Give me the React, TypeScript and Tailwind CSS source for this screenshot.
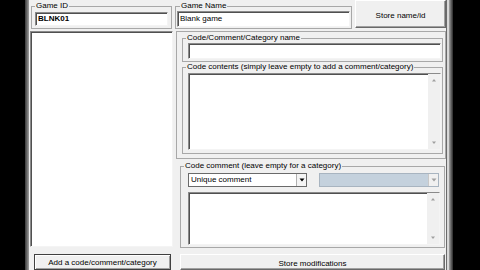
import type { ReactNode } from "react";

const SUNKEN =
  "border border-t-[#8a8a8a] border-l-[#8a8a8a] border-r-[#f4f4f4] border-b-[#f4f4f4] shadow-[inset_1px_1px_0_#505050] bg-white";
const RAISED =
  "border border-t-white border-l-white border-r-[#696969] border-b-[#696969] shadow-[inset_-1px_-1px_0_#a0a0a0] bg-[#f0f0f0]";

function Group({ label, className, children }: { label?: string; className: string; children: ReactNode }) {
  return (
    <fieldset className={`border border-[#a8a8a8] ${className}`}>
      {label && <legend className="ml-[3px] px-[1px] leading-[10px]">{label}</legend>}
      {children}
    </fieldset>
  );
}

function ScrollBar() {
  return (
    <div className="flex w-[12px] shrink-0 flex-col justify-between bg-[#f0f0f0] py-[3px]">
      <svg width="12" height="6" viewBox="0 0 12 6">
        <path d="M4 4.5 L6 2 L8 4.5 Z" fill="#a0a0a0" />
      </svg>
      <svg width="12" height="6" viewBox="0 0 12 6">
        <path d="M4 1.5 L6 4 L8 1.5 Z" fill="#a0a0a0" />
      </svg>
    </div>
  );
}

function Select({ text, disabled, className }: { text?: string; disabled?: boolean; className: string }) {
  return (
    <div
      className={`flex h-[14px] items-center border ${
        disabled ? "border-[#a8b4c0] bg-[#c4d1dd]" : "border-[#6a6a6a] bg-white"
      } ${className}`}
    >
      <span className="flex-1 truncate pl-[2px] leading-[12px]">{text}</span>
      <div
        className={`flex h-[12px] w-[10px] items-center justify-center border-l ${
          disabled ? "border-[#c8c8c8] bg-[#f0f0f0]" : "border-[#b0b0b0] bg-[#f4f4f4]"
        }`}
      >
        <svg width="6" height="4" viewBox="0 0 6 4">
          <path d="M0.5 0.5 L5.5 0.5 L3 3.5 Z" fill={disabled ? "#a0a0a0" : "#000"} />
        </svg>
      </div>
    </div>
  );
}

export default function App() {
  return (
    <div className="flex h-[270px] w-[480px] overflow-hidden bg-black font-['Liberation_Sans',Arial,sans-serif] text-[8px] text-black">
      <div className="w-[25px] shrink-0" />
      <div className="w-[4px] shrink-0 bg-gradient-to-r from-[#3a3a3a] to-[#a0a0a0]" />

      <div className="flex w-[417px] shrink-0 bg-[#f0f0f0]">
        {/* left column: id + code list */}
        <div className="flex w-[146px] shrink-0 flex-col">
          <Group label="Game ID" className="ml-[2px] mt-[1px] w-[141px] pb-[2px]">
            <div className={`${SUNKEN} ml-[3px] mt-[1px] flex h-[14px] w-[133px] items-center pl-[2px] font-bold`}>
              BLNK01
            </div>
          </Group>
          <div className={`${SUNKEN} ml-[1px] mt-[2px] h-[218px] w-[143px]`} />
          <div className="ml-[5px] mt-[7px] flex h-[16px] w-[137px] items-start justify-center border border-[#404040] bg-[#f0f0f0] pt-[2px] shadow-[inset_1px_1px_0_#fff,inset_-1px_-1px_0_#a0a0a0]">
            Add a code/comment/category
          </div>
        </div>

        {/* right column: name + code editor */}
        <div className="flex w-[271px] shrink-0 flex-col">
          <div className="flex h-[29px] items-start">
            <Group label="Game Name" className="mt-[1px] w-[177px] px-[1px] pb-[1px]">
              <div className={`${SUNKEN} flex h-[16px] w-[173px] items-center pl-[2px]`}>Blank game</div>
            </Group>
            <div className={`${RAISED} ml-[3px] flex h-[28px] w-[91px] items-center justify-center pt-[4px]`}>
              Store name/id
            </div>
          </div>

          <div className="ml-[1px] mt-[2px] flex h-[129px] w-[270px] flex-col border border-[#a8a8a8]">
            <Group label="Code/Comment/Category name" className="ml-[5px] mt-[1px] w-[261px] pb-[2px]">
              <div className={`${SUNKEN} ml-[5px] h-[16px] w-[253px]`} />
            </Group>
            <Group
              label="Code contents (simply leave empty to add a comment/category)"
              className="ml-[5px] w-[261px] pb-[3px]"
            >
              <div className={`${SUNKEN} ml-[5px] mt-[1px] flex h-[77px] w-[253px] justify-end`}>
                <ScrollBar />
              </div>
            </Group>
          </div>

          <Group label="Code comment (leave empty for a category)" className="ml-[5px] mt-[2px] w-[265px] pb-[2px]">
            <div className="ml-[7px] mt-[2px] flex gap-[12px]">
              <Select text="Unique comment" className="w-[119px]" />
              <Select disabled className="w-[120px]" />
            </div>
            <div className={`${SUNKEN} ml-[7px] mt-[5px] flex h-[53px] w-[252px] justify-end`}>
              <ScrollBar />
            </div>
          </Group>

          <div className={`${RAISED} ml-[5px] mt-[6px] flex h-[16px] w-[265px] items-start justify-center pt-[3px]`}>
            Store modifications
          </div>
        </div>
      </div>

      <div className="flex w-[7px] shrink-0">
        <div className="w-[1px] bg-[#6a6a6a]" />
        <div className="w-[2px] bg-[#d8d8d8]" />
        <div className="w-[4px] bg-gradient-to-r from-[#a8a8a8] to-[#2a2a2a]" />
      </div>
      <div className="flex-1" />
    </div>
  );
}
